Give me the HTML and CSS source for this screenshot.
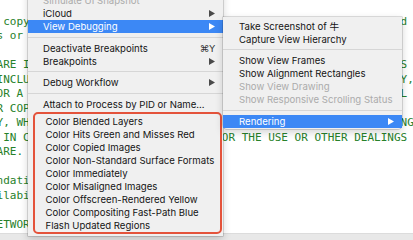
FILE: index.html
```html
<!DOCTYPE html>
<html>
<head>
<meta charset="utf-8">
<title>Debug menu - View Debugging</title>
<link rel="stylesheet" href="styles.css">
</head>
<body>
<div id="screen">
<pre class="editor">

The above copyright notice and this permission notice shall be included in all
    copies or substantial portions of the Software.

THE SOFTWARE IS PROVIDED "AS IS", WITHOUT WARRANTY OF ANY KIND, EXPRESS OR
IMPLIED, INCLUDING BUT NOT LIMITED TO THE WARRANTIES OF MERCHANTABILITY,
FITNESS FOR A PARTICULAR PURPOSE AND NONINFRINGEMENT. IN NO EVENT SHALL THE
AUTHORS OR COPYRIGHT HOLDERS BE LIABLE FOR ANY CLAIM, DAMAGES OR OTHER
 LIABILITY, WHETHER IN AN ACTION OF CONTRACT, TORT OR OTHERWISE, ARISING FROM,
OUT OF OR IN CONNECTION WITH THE  SOFTWARE OR THE USE OR OTHER DEALINGS
    SOFTWARE.

  Recommendations are in the docs.
Check availability first.

PRIVATE NETWORK ACCESS.
</pre>
<div class="statusbar"></div>
</div>

<div class="menu main-menu">
	<div class="item off"><span>Simulate UI Snapshot</span></div>
	<div class="item"><span>iCloud</span><svg class="arrow" viewBox="0 0 6 7"><path d="M0 0L6 3.5L0 7Z"/></svg></div>
	<div class="item on"><span>View Debugging</span><svg class="arrow" viewBox="0 0 6 7"><path d="M0 0L6 3.5L0 7Z"/></svg></div>
	<div class="sep"></div>
	<div class="item"><span>Deactivate Breakpoints</span><span class="key">⌘Y</span></div>
	<div class="item"><span>Breakpoints</span><svg class="arrow" viewBox="0 0 6 7"><path d="M0 0L6 3.5L0 7Z"/></svg></div>
	<div class="sep"></div>
	<div class="item"><span>Debug Workflow</span><svg class="arrow" viewBox="0 0 6 7"><path d="M0 0L6 3.5L0 7Z"/></svg></div>
	<div class="sep"></div>
	<div class="item"><span>Attach to Process by PID or Name...</span></div>
	<div class="marked">
		<div class="item"><span>Color Blended Layers</span></div>
		<div class="item"><span>Color Hits Green and Misses Red</span></div>
		<div class="item"><span>Color Copied Images</span></div>
		<div class="item"><span>Color Non-Standard Surface Formats</span></div>
		<div class="item"><span>Color Immediately</span></div>
		<div class="item"><span>Color Misaligned Images</span></div>
		<div class="item"><span>Color Offscreen-Rendered Yellow</span></div>
		<div class="item"><span>Color Compositing Fast-Path Blue</span></div>
		<div class="item"><span>Flash Updated Regions</span></div>
	</div>
</div>

<div class="menu sub-menu">
	<div class="item"><span>Take Screenshot of 牛</span></div>
	<div class="item"><span>Capture View Hierarchy</span></div>
	<div class="sep"></div>
	<div class="item"><span>Show View Frames</span></div>
	<div class="item"><span>Show Alignment Rectangles</span></div>
	<div class="item off"><span>Show View Drawing</span></div>
	<div class="item off"><span>Show Responsive Scrolling Status</span></div>
	<div class="sep"></div>
	<div class="item on"><span>Rendering</span><svg class="arrow" viewBox="0 0 6 7"><path d="M0 0L6 3.5L0 7Z"/></svg></div>
</div>
</body>
</html>
```

FILE: styles.css
```css
html, body{margin:0; padding:0;}
body{width:413px; height:240px; overflow:hidden; position:relative; background:#fff; font-family:"Inter","Noto Sans CJK SC","DejaVu Sans",sans-serif;}

#screen{display:flex; flex-direction:column; height:240px;}
.editor{flex:1; margin:0 0 0 -63px; overflow:hidden; font-family:"DejaVu Sans Mono",monospace; font-size:11px; line-height:14.5px; color:#27812a;}
.statusbar{height:6px; border-top:1px solid #dcdcdc; background:#e8e8e8;}

.menu{position:absolute; background:#f0f0f0; box-shadow:0 0 0 0.5px rgba(0,0,0,.25), 0 3px 8px rgba(0,0,0,.18); font-size:9.6px; color:#141414;}
.main-menu{left:28px; top:-10px; width:195px; padding:4px 0 2px;}
.sub-menu{left:223px; top:16.5px; width:179px; padding:3px 0 1.5px; border-radius:0 0 4px 4px;}

.item{display:flex; align-items:center; justify-content:space-between; height:13px; padding:0 8px 0 15px; white-space:nowrap;}
.sub-menu .item{padding-left:16px;}
.item.on{background:#3c88f5; color:#fff;}
.item.off{color:#ababab;}
.arrow{width:6px; height:7px; fill:#4a4a4a;}
.item.on .arrow{fill:#fff;}
.key{font-family:"DejaVu Sans",sans-serif; font-size:9.5px; color:#333;}

.sep{height:8.5px; display:flex; align-items:center;}
.sep::before{content:""; flex:1; height:1px; background:#d6d6d6;}

.marked{margin:1.5px 1px 0 4.5px; border:2px solid #e4533b; border-radius:5px; padding:0.5px 0;}
.marked .item{padding-left:11px;}
```
